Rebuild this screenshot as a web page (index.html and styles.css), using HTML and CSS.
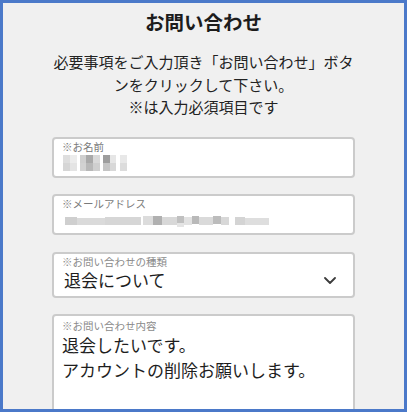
FILE: index.html
```html
<!DOCTYPE html>
<html lang="ja">
<head>
<meta charset="utf-8">
<link rel="stylesheet" href="styles.css">
</head>
<body>
<div class="frame">
  <h1 class="title">お問い合わせ</h1>
  <p class="lead">必要事項をご入力頂き「お問い合わせ」ボタ<br>ンをクリックして下さい。<br>※は入力必須項目です</p>
  <div class="form">
    <div class="field short">
      <div class="label">※お名前</div>
      <svg class="mosaic" width="70" height="16" viewBox="0 0 70 16">
        <rect x="0" y="0" width="7" height="8" fill="#dedede"/>
        <rect x="0" y="8" width="7" height="8" fill="#d6d6d6"/>
        <rect x="7" y="0" width="7" height="8" fill="#ececec"/>
        <rect x="7" y="8" width="7" height="8" fill="#e4e4e4"/>
        <rect x="17" y="0" width="6" height="8" fill="#cfcfcf"/>
        <rect x="17" y="8" width="6" height="8" fill="#d2d2d2"/>
        <rect x="23" y="0" width="7" height="8" fill="#a9a9a9"/>
        <rect x="23" y="8" width="7" height="8" fill="#b8b8b8"/>
        <rect x="30" y="0" width="7" height="8" fill="#d9d9d9"/>
        <rect x="30" y="8" width="7" height="8" fill="#cfcfcf"/>
        <rect x="40" y="0" width="7" height="8" fill="#9d9d9d"/>
        <rect x="40" y="8" width="7" height="8" fill="#c4c4c4"/>
        <rect x="47" y="0" width="6" height="8" fill="#e6e6e6"/>
        <rect x="47" y="8" width="6" height="8" fill="#d8d8d8"/>
        <rect x="57" y="0" width="7" height="8" fill="#e8e8e8"/>
        <rect x="57" y="8" width="7" height="8" fill="#dcdcdc"/>
      </svg>
    </div>
    <div class="field short">
      <div class="label">※メールアドレス</div>
      <svg class="mosaic mail" width="204" height="14" viewBox="0 0 204 14">
        <rect x="0" y="3" width="12" height="8" fill="#cfcfcf"/>
        <rect x="12" y="4" width="28" height="7" fill="#dadada"/>
        <rect x="40" y="3" width="36" height="8" fill="#d6d6d6"/>
        <rect x="78" y="2" width="10" height="9" fill="#dcdcdc"/>
        <rect x="88" y="2" width="9" height="9" fill="#b0b0b0"/>
        <rect x="97" y="3" width="15" height="8" fill="#d8d8d8"/>
        <rect x="112" y="2" width="7" height="7" fill="#c0c0c0"/>
        <rect x="112" y="9" width="7" height="4" fill="#e4e4e4"/>
        <rect x="119" y="3" width="8" height="8" fill="#e2e2e2"/>
        <rect x="127" y="2" width="7" height="8" fill="#b9b9b9"/>
        <rect x="134" y="3" width="14" height="8" fill="#dadada"/>
        <rect x="148" y="2" width="8" height="8" fill="#bcbcbc"/>
        <rect x="156" y="3" width="8" height="8" fill="#d8d8d8"/>
        <rect x="170" y="3" width="10" height="8" fill="#d4d4d4"/>
        <rect x="180" y="4" width="24" height="7" fill="#dedede"/>
      </svg>
    </div>
    <div class="field select">
      <div class="label">※お問い合わせの種類</div>
      <div class="select-row">
        <span class="value">退会について</span>
        <svg class="chev" width="12" height="7" viewBox="0 0 12 7"><path d="M1 1 L6 6 L11 1" fill="none" stroke="#3c3c3c" stroke-width="1.8" stroke-linecap="round" stroke-linejoin="round"/></svg>
      </div>
    </div>
    <div class="field area">
      <div class="label">※お問い合わせ内容</div>
      <div class="text">退会したいです。<br>アカウントの削除お願いします。</div>
    </div>
  </div>
</div>
</body>
</html>
```
FILE: styles.css
```css
html, body {
  margin: 0;
  padding: 0;
  background: #ffffff;
}
body {
  font-family: "Noto Sans CJK JP", "Noto Sans", sans-serif;
  color: #222;
}
.frame {
  box-sizing: border-box;
  width: 407px;
  height: 412px;
  border: 3px solid #4b79c9;
  background: #f0f0f0;
  padding: 6px 49px 0;
  overflow: hidden;
}
.title {
  margin: 0;
  font-size: 19.5px;
  line-height: 26px;
  font-weight: 700;
  text-align: center;
  color: #1c1c1c;
}
.lead {
  margin: 16px -4px 0;
  font-size: 15px;
  line-height: 22.5px;
  text-align: center;
  color: #222;
}
.form {
  display: flex;
  flex-direction: column;
  gap: 16px;
  margin-top: 18px;
}
.field {
  box-sizing: border-box;
  background: #fff;
  border: 2px solid #cbcbcb;
  border-radius: 4px;
  padding: 1.5px 8px 0 8px;
}
.label {
  font-size: 10.5px;
  line-height: 13px;
  color: #7a7a7a;
}
.short {
  height: 41px;
}
.mosaic {
  display: block;
  margin-top: 1.5px;
  margin-left: 1px;
}
.mosaic.mail {
  margin-top: 4px;
  margin-left: 3px;
}
.select {
  height: 46px;
  margin-top: 1px;
}
.select .label {
  color: #8a8a8a;
}
.select-row {
  display: flex;
  align-items: center;
  justify-content: space-between;
  padding-right: 9px;
  margin-top: 2px;
}
.value {
  font-size: 17px;
  line-height: 19px;
  padding-left: 2px;
  color: #1e1e1e;
}
.chev {
  display: block;
  margin-top: 2px;
}
.area {
  height: 130px;
  padding-top: 3.5px;
}
.area .label {
  color: #8a8a8a;
}
.text {
  font-size: 17px;
  line-height: 25px;
  color: #1e1e1e;
}
```
